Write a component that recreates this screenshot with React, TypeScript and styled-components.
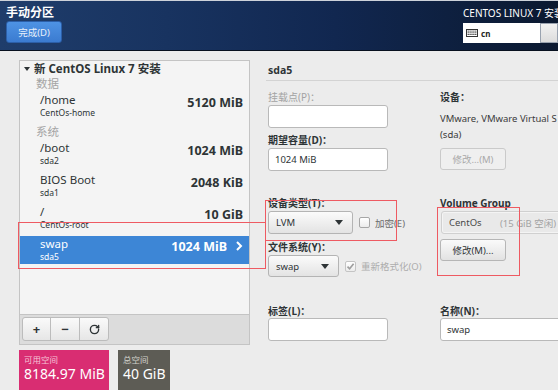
import React from "react";
import styled, { createGlobalStyle } from "styled-components";
import { RotateCw } from "lucide-react";

const Global = createGlobalStyle`
  html, body { margin: 0; padding: 0; }
  body {
    width: 558px; height: 390px; overflow: hidden; background: #ececec;
    font-family: "Noto Sans", "Noto Sans CJK SC", sans-serif;
  }
`;

const Screen = styled.div`
  position: relative;
  width: 558px;
  height: 390px;
  overflow: hidden;
  background: #ececec;
  color: #2e3436;
`;

const Header = styled.header`
  box-sizing: border-box;
  height: 51px;
  border-top: 1px solid #cdd2da;
  border-bottom: 1px solid #08111f;
  background: linear-gradient(to right, #1f3d6b 0%, #183360 30%, #112750 60%, #0b1930 100%);
  display: flex;
  justify-content: space-between;
`;

const HeaderLeft = styled.div`
  padding: 5px 0 0 6px;
  display: flex;
  flex-direction: column;
  align-items: flex-start;
`;

const Title = styled.div`
  font-size: 12px;
  font-weight: 700;
  line-height: 14px;
  color: #ffffff;
`;

const DoneButton = styled.div`
  box-sizing: border-box;
  margin-top: 1px;
  width: 56px;
  height: 22px;
  border: 1px solid #2c5fa8;
  border-radius: 3px;
  background: linear-gradient(#4e93e4, #3b7bd0);
  color: #e8f0fb;
  font-size: 9.5px;
  display: flex;
  align-items: center;
  justify-content: center;
`;

const HeaderRight = styled.div`
  width: 95px;
  padding-top: 6px;
  display: flex;
  flex-direction: column;
`;

const Product = styled.div`
  font-size: 10px;
  line-height: 12px;
  color: #ffffff;
  white-space: nowrap;
`;

const KeyboardRow = styled.div`
  margin-top: 4px;
  display: flex;
  height: 20px;
`;

const KeyboardBox = styled.div`
  box-sizing: border-box;
  width: 85px;
  height: 20px;
  background: #ffffff;
  display: flex;
  align-items: center;
  gap: 3px;
  padding-left: 3px;
  font-size: 8px;
  font-weight: 700;
  color: #222;
`;

const HelpStub = styled.div`
  box-sizing: border-box;
  width: 20px;
  height: 20px;
  background: linear-gradient(#f2f2f2, #dcdcdc);
  border: 1px solid #9aa3b0;
`;

const Main = styled.div`
  display: flex;
  height: 339px;
`;

const LeftCol = styled.div`
  box-sizing: border-box;
  flex: none;
  width: 266px;
  padding: 9px 0 0 19px;
  display: flex;
  flex-direction: column;
`;

const Panel = styled.div`
  box-sizing: border-box;
  width: 231px;
  height: 292px;
  border: 1px solid #c4c4c4;
  background: #f4f4f4;
  display: flex;
  flex-direction: column;
`;

const List = styled.div`
  flex: 1;
`;

const TreeHeader = styled.div`
  height: 15px;
  line-height: 15px;
  padding-left: 4px;
  font-size: 11.5px;
  font-weight: 700;
  display: flex;
  align-items: center;
  gap: 3px;
  color: #2e3436;
`;

const Caret = styled.span`
  width: 0;
  height: 0;
  border-left: 3px solid transparent;
  border-right: 3px solid transparent;
  border-top: 4px solid #2e3436;
  margin-right: 1px;
`;

const Category = styled.div<{ $top?: number }>`
  height: 16px;
  line-height: 16px;
  padding-left: 16px;
  margin-top: ${(p) => p.$top ?? 0}px;
  font-size: 11.5px;
  color: #a4a4a4;
`;

const Entry = styled.div<{ $selected?: boolean }>`
  box-sizing: border-box;
  height: 28px;
  margin-bottom: 4px;
  padding: 1px 6px 0 20px;
  display: grid;
  grid-template-columns: 1fr auto auto;
  grid-template-rows: 14px 12px;
  background: ${(p) => (p.$selected ? "#3d86d6" : "transparent")};
  color: ${(p) => (p.$selected ? "#ffffff" : "#2e3436")};
`;

const EntryName = styled.div`
  grid-column: 1;
  grid-row: 1;
  font-size: 11.5px;
  line-height: 14px;
`;

const EntrySub = styled.div`
  grid-column: 1;
  grid-row: 2;
  font-size: 8.5px;
  line-height: 12px;
`;

const EntrySize = styled.div`
  grid-column: 2;
  grid-row: 1 / span 2;
  margin-top: 3px;
  font-size: 12.5px;
  font-weight: 700;
  line-height: 14px;
  white-space: nowrap;
`;

const Chevron = styled.div`
  grid-column: 3;
  grid-row: 1 / span 2;
  margin: 4px 0 0 8px;
  display: flex;
`;

const Toolbar = styled.div`
  box-sizing: border-box;
  height: 30px;
  border-top: 1px solid #c4c4c4;
  background: #dcdcdc;
  padding: 2px 0 0 2px;
  display: flex;
`;

const ToolButton = styled.div<{ $w: number }>`
  box-sizing: border-box;
  width: ${(p) => p.$w}px;
  height: 24px;
  margin-left: -1px;
  border: 1px solid #bcbcbc;
  background: linear-gradient(#fafafa, #e6e6e6);
  display: flex;
  align-items: center;
  justify-content: center;
  font-size: 13px;
  font-weight: 700;
  color: #2e3436;
  &:first-child { margin-left: 0; border-radius: 3px 0 0 3px; }
  &:last-child { border-radius: 0 3px 3px 0; }
`;

const Stats = styled.div`
  margin-top: 5px;
  display: flex;
  gap: 9px;
`;

const StatBox = styled.div<{ $bg: string; $w: number; $label: string }>`
  box-sizing: border-box;
  width: ${(p) => p.$w}px;
  height: 40px;
  padding: 5px 0 0 5px;
  background: ${(p) => p.$bg};
  color: #ffffff;
  & > span:first-child {
    display: block;
    font-size: 8.5px;
    line-height: 10px;
    color: ${(p) => p.$label};
  }
  & > span:last-child {
    display: block;
    font-size: 14px;
    line-height: 18px;
    white-space: nowrap;
  }
`;

const RightCol = styled.div`
  flex: none;
  width: 340px;
  display: flex;
  flex-direction: column;
`;

const DetailHeader = styled.div`
  padding: 12px 0 3px 2px;
  font-size: 10.5px;
  font-weight: 700;
  line-height: 14px;
  border-bottom: 1px solid #d3d3d3;
`;

const FormRow = styled.div<{ $top: number }>`
  margin-top: ${(p) => p.$top}px;
  padding-left: 2px;
  display: grid;
  grid-template-columns: 172px 160px;
  align-items: start;
`;

const Field = styled.div`
  display: flex;
  flex-direction: column;
  align-items: flex-start;
`;

const Label = styled.div<{ $muted?: boolean; $top?: number }>`
  margin-top: ${(p) => p.$top ?? 0}px;
  font-size: 10px;
  line-height: 14px;
  font-weight: ${(p) => (p.$muted ? 400 : 700)};
  color: ${(p) => (p.$muted ? "#a3a3a3" : "#2e3436")};
  white-space: nowrap;
`;

const TextInput = styled.div<{ $w: number; $top?: number }>`
  box-sizing: border-box;
  margin-top: ${(p) => p.$top ?? 1}px;
  width: ${(p) => p.$w}px;
  height: 23px;
  border: 1px solid #b9b9b9;
  border-radius: 3px;
  background: #ffffff;
  padding: 0 6px;
  display: flex;
  align-items: center;
  font-size: 9.5px;
  color: #2e3436;
`;

const InfoText = styled.div<{ $top?: number }>`
  margin-top: ${(p) => p.$top ?? 0}px;
  font-size: 9.5px;
  line-height: 16px;
  color: #3a3a3a;
  white-space: nowrap;
`;

const Button = styled.div<{ $disabled?: boolean; $top?: number }>`
  box-sizing: border-box;
  margin-top: ${(p) => p.$top ?? 5}px;
  width: 66px;
  height: 22px;
  border: 1px solid ${(p) => (p.$disabled ? "#cacaca" : "#b6b6b6")};
  border-radius: 3px;
  background: ${(p) => (p.$disabled ? "#efefef" : "linear-gradient(#fafafa, #e2e2e2)")};
  color: ${(p) => (p.$disabled ? "#a9a9a9" : "#2e3436")};
  font-size: 9.5px;
  display: flex;
  align-items: center;
  justify-content: center;
`;

const ControlRow = styled.div`
  margin-top: 1px;
  display: flex;
  align-items: center;
`;

const Dropdown = styled.div<{ $w: number; $h: number }>`
  box-sizing: border-box;
  width: ${(p) => p.$w}px;
  height: ${(p) => p.$h}px;
  border: 1px solid #b4b4b4;
  border-radius: 3px;
  background: linear-gradient(#fbfbfb, #e3e3e3);
  padding: 0 9px 0 7px;
  display: flex;
  align-items: center;
  justify-content: space-between;
  font-size: 9.5px;
  color: #2e3436;
`;

const Arrow = styled.span`
  width: 0;
  height: 0;
  border-left: 4px solid transparent;
  border-right: 4px solid transparent;
  border-top: 5px solid #2e3436;
`;

const Check = styled.div<{ $disabled?: boolean }>`
  box-sizing: border-box;
  width: 11px;
  height: 11px;
  border: 1px solid ${(p) => (p.$disabled ? "#c4c4c4" : "#a6a6a6")};
  border-radius: 2px;
  background: linear-gradient(#ffffff, #ececec);
  display: flex;
  align-items: center;
  justify-content: center;
`;

const CheckLabel = styled.label<{ $muted?: boolean }>`
  margin-left: 6px;
  display: flex;
  align-items: center;
  gap: 5px;
  font-size: 9.5px;
  color: ${(p) => (p.$muted ? "#acacac" : "#6a6a6a")};
  white-space: nowrap;
`;

const GroupSelect = styled.div`
  box-sizing: border-box;
  margin: 1px 0 0 1px;
  width: 150px;
  height: 23px;
  border: 1px solid #d0d0d0;
  border-radius: 3px;
  background: #e9e9e9;
  box-shadow: inset 0 0 0 1px #f4f4f4;
  padding-left: 7px;
  display: flex;
  align-items: center;
  font-size: 9.5px;
  white-space: nowrap;
  & > span:first-child { width: 51px; color: #4a4a4a; }
  & > span:last-child { color: #a3a3a3; }
`;

const Annotation = styled.div`
  position: absolute;
  z-index: 5;
  box-sizing: border-box;
  border: 1px solid #ee5a62;
  pointer-events: none;
`;

const KeyboardIcon = () => (
  <svg width="12" height="8" viewBox="0 0 12 8">
    <rect x="0.5" y="0.5" width="11" height="7" fill="#fff" stroke="#333" />
    {[0, 1, 2].map((r) =>
      [0, 1, 2, 3, 4].map((c) => (
        <rect key={`${r}-${c}`} x={1.6 + c * 1.9} y={1.6 + r * 1.7} width="1.2" height="1" fill="#333" />
      ))
    )}
  </svg>
);

const CheckMark = ({ color }: { color: string }) => (
  <svg width="9" height="9" viewBox="0 0 9 9">
    <path d="M1.5 4.6 L3.6 6.8 L7.6 1.8" fill="none" stroke={color} strokeWidth="1.6" />
  </svg>
);

type Part = { name: string; sub: string; size: string; selected?: boolean };

const dataParts: Part[] = [{ name: "/home", sub: "CentOs-home", size: "5120 MiB" }];
const systemParts: Part[] = [
  { name: "/boot", sub: "sda2", size: "1024 MiB" },
  { name: "BIOS Boot", sub: "sda1", size: "2048 KiB" },
  { name: "/", sub: "CentOs-root", size: "10 GiB" },
  { name: "swap", sub: "sda5", size: "1024 MiB", selected: true },
];

const PartEntry = ({ p }: { p: Part }) => (
  <Entry $selected={p.selected}>
    <EntryName>{p.name}</EntryName>
    <EntrySub>{p.sub}</EntrySub>
    <EntrySize>{p.size}</EntrySize>
    {p.selected && (
      <Chevron>
        <svg width="8" height="10" viewBox="0 0 8 10">
          <path d="M2 1 L6 5 L2 9" fill="none" stroke="#fff" strokeWidth="2" />
        </svg>
      </Chevron>
    )}
  </Entry>
);

export default function App() {
  return (
    <Screen>
      <Global />
      <Header>
        <HeaderLeft>
          <Title>手动分区</Title>
          <DoneButton>完成(D)</DoneButton>
        </HeaderLeft>
        <HeaderRight>
          <Product>CENTOS LINUX 7 安装</Product>
          <KeyboardRow>
            <KeyboardBox>
              <KeyboardIcon />
              cn
            </KeyboardBox>
            <HelpStub />
          </KeyboardRow>
        </HeaderRight>
      </Header>
      <Main>
        <LeftCol>
          <Panel>
            <List>
              <TreeHeader>
                <Caret />
                新 CentOS Linux 7 安装
              </TreeHeader>
              <Category>数据</Category>
              {dataParts.map((p) => (
                <PartEntry key={p.name} p={p} />
              ))}
              <Category $top={2}>系统</Category>
              {systemParts.map((p) => (
                <PartEntry key={p.name} p={p} />
              ))}
            </List>
            <Toolbar>
              <ToolButton $w={29}>+</ToolButton>
              <ToolButton $w={30}>−</ToolButton>
              <ToolButton $w={30}>
                <RotateCw size={11} strokeWidth={3} color="#2e3436" />
              </ToolButton>
            </Toolbar>
          </Panel>
          <Stats>
            <StatBox $bg="#d92d72" $w={90} $label="#f6c3d7">
              <span>可用空间</span>
              <span>8184.97 MiB</span>
            </StatBox>
            <StatBox $bg="#5d5c55" $w={52} $label="#d3d2cc">
              <span>总空间</span>
              <span>40 GiB</span>
            </StatBox>
          </Stats>
        </LeftCol>
        <RightCol>
          <DetailHeader>sda5</DetailHeader>
          <FormRow $top={9}>
            <Field>
              <Label $muted>挂载点(P)：</Label>
              <TextInput $w={120} />
              <Label $top={5}>期望容量(D)：</Label>
              <TextInput $w={120}>1024 MiB</TextInput>
            </Field>
            <Field>
              <Label>设备：</Label>
              <InfoText $top={7}>VMware, VMware Virtual S</InfoText>
              <InfoText>(sda)</InfoText>
              <Button $disabled>修改...(M)</Button>
            </Field>
          </FormRow>
          <FormRow $top={25}>
            <Field>
              <Label>设备类型(T)：</Label>
              <ControlRow>
                <Dropdown $w={85} $h={23}>
                  LVM
                  <Arrow />
                </Dropdown>
                <CheckLabel>
                  <Check />
                  加密(E)
                </CheckLabel>
              </ControlRow>
              <Label $top={6}>文件系统(Y)：</Label>
              <ControlRow>
                <Dropdown $w={71} $h={22}>
                  swap
                  <Arrow />
                </Dropdown>
                <CheckLabel $muted>
                  <Check $disabled>
                    <CheckMark color="#9e9e9e" />
                  </Check>
                  重新格式化(O)
                </CheckLabel>
              </ControlRow>
            </Field>
            <Field>
              <Label>Volume Group</Label>
              <GroupSelect>
                <span>CentOs</span>
                <span>(15 GiB 空闲)</span>
              </GroupSelect>
              <Button $top={5}>修改(M)...</Button>
            </Field>
          </FormRow>
          <FormRow $top={27}>
            <Field>
              <Label>标签(L)：</Label>
              <TextInput $w={120} $top={0} />
            </Field>
            <Field>
              <Label>名称(N)：</Label>
              <TextInput $w={150} $top={0}>swap</TextInput>
            </Field>
          </FormRow>
        </RightCol>
      </Main>
      <Annotation style={{ left: 18, top: 222, width: 248, height: 47 }} />
      <Annotation style={{ left: 265, top: 200, width: 132, height: 41 }} />
      <Annotation style={{ left: 437, top: 207, width: 83, height: 69 }} />
    </Screen>
  );
}
